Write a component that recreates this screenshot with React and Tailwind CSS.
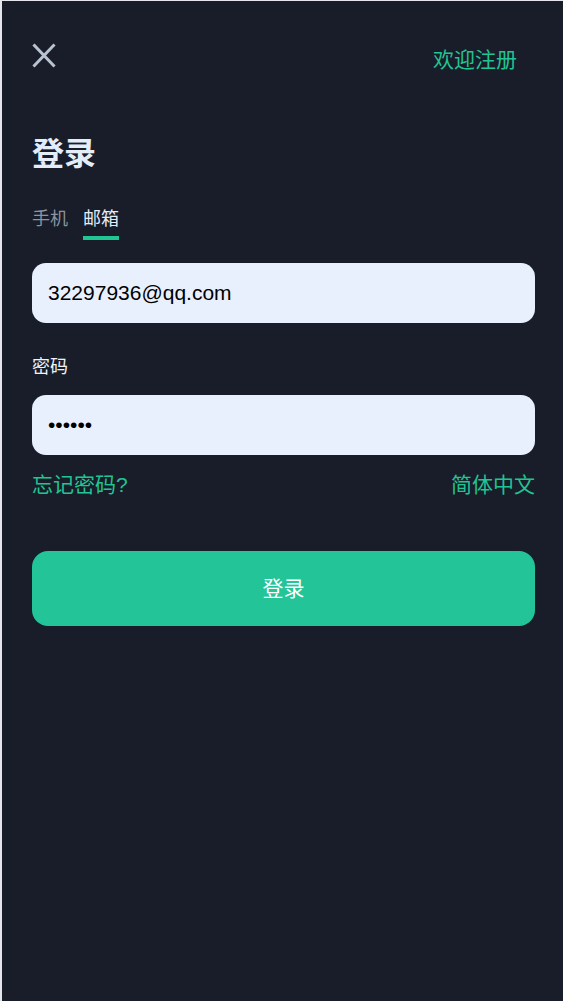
import { useState } from 'react';

export default function App() {
  const [tab, setTab] = useState('email');
  const [email, setEmail] = useState('32297936@qq.com');
  const [password, setPassword] = useState('123456');

  return (
    <div
      className="min-h-[1001px] bg-[#181d29] border-l-2 border-t border-[#e4e6eb] pl-[30px] pr-[28px]"
      style={{ fontFamily: '"Liberation Sans", "Noto Sans CJK SC", sans-serif' }}
    >
      <div className="flex items-start justify-between pt-[42px]">
        <button className="w-[24px] h-[25px] flex items-center justify-center">
          <svg width="24" height="25" viewBox="0 0 24 25" fill="none" stroke="#b9c2cf" strokeWidth="3" strokeLinecap="square">
            <line x1="2.5" y1="2.5" x2="21.5" y2="22.5" />
            <line x1="21.5" y1="2.5" x2="2.5" y2="22.5" />
          </svg>
        </button>
        <a className="text-[21px] leading-[28px] text-[#21c493] mr-[18px] mt-[3px]">欢迎注册</a>
      </div>

      <h1 className="mt-[60px] text-[32px] leading-[40px] font-bold text-[#e4ecf8]">登录</h1>

      <div className="flex gap-[15px] mt-[33px]">
        <button
          onClick={() => setTab('phone')}
          className={`relative text-[18px] leading-[24px] pb-[9px] ${tab === 'phone' ? 'text-[#e4ecf8]' : 'text-[#8c949f]'}`}
        >
          手机
          {tab === 'phone' && <span className="absolute left-0 right-0 bottom-0 h-[4px] bg-[#21c493]" />}
        </button>
        <button
          onClick={() => setTab('email')}
          className={`relative text-[18px] leading-[24px] pb-[9px] ${tab === 'email' ? 'text-[#e4ecf8]' : 'text-[#8c949f]'}`}
        >
          邮箱
          {tab === 'email' && <span className="absolute left-0 right-0 bottom-0 h-[4px] bg-[#21c493]" />}
        </button>
      </div>

      <input
        type="text"
        value={email}
        onChange={(e) => setEmail(e.target.value)}
        className="block mt-[23px] w-full h-[60px] rounded-[14px] bg-[#e8f0fe] px-[16px] text-[21px] text-black outline-none"
      />

      <div className="mt-[32px] text-[18px] leading-[24px] text-[#eef2f8]">密码</div>

      <input
        type="password"
        value={password}
        onChange={(e) => setPassword(e.target.value)}
        className="block mt-[16px] w-full h-[60px] rounded-[14px] bg-[#e8f0fe] px-[16px] text-[21px] text-black outline-none"
      />

      <div className="flex justify-between mt-[16px] text-[21px] leading-[28px] text-[#21c493]">
        <a>忘记密码?</a>
        <a>简体中文</a>
      </div>

      <button className="block mt-[52px] w-full h-[75px] rounded-[16px] bg-[#22c498] text-white text-[21px]">
        登录
      </button>
    </div>
  );
}
